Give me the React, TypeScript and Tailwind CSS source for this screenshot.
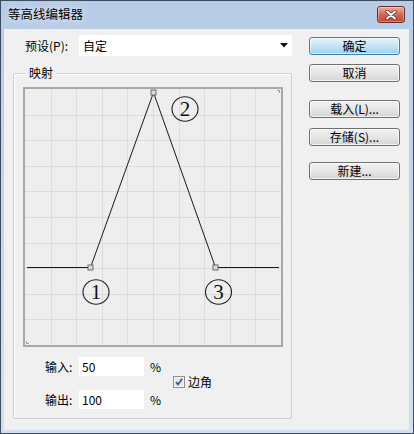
import React from "react";

const font = { fontFamily: '"Noto Sans CJK SC", "Noto Sans", sans-serif' };

function Btn({ label, primary, mt }: { label: string; primary?: boolean; mt: string }) {
  return (
    <div
      className={
        "w-[91px] h-[18px] rounded-[3px] border flex items-center justify-center text-[12px] leading-none text-black " +
        mt +
        " " +
        (primary
          ? "border-[#3c7fb1] bg-gradient-to-b from-[#e5f4fc] via-[#c4e5f6] to-[#98d1ef] shadow-[inset_0_0_0_1px_rgba(255,255,255,0.6)]"
          : "border-[#707070] bg-gradient-to-b from-[#f2f2f2] via-[#e6e6e6] to-[#d4d4d4] shadow-[inset_0_0_0_1px_rgba(255,255,255,0.7)]")
      }
    >
      {label}
    </div>
  );
}

function Circled({ cx, cy, n }: { cx: number; cy: number; n: string }) {
  return (
    <g>
      <ellipse cx={cx} cy={cy} rx={13} ry={12.3} fill="none" stroke="#222" strokeWidth={1.1} />
      <text
        x={cx}
        y={cy + 7}
        textAnchor="middle"
        fontSize={21}
        fill="#111"
        style={{ fontFamily: '"Liberation Serif", "DejaVu Serif", serif' }}
      >
        {n}
      </text>
    </g>
  );
}

function Graph() {
  const lines = [];
  for (let i = 1; i < 10; i++) {
    const p = Math.round(i * 25.6) + 0.5;
    lines.push(<line key={"v" + i} x1={p} y1={0} x2={p} y2={256} stroke="#dcdcdc" strokeWidth={1} />);
    lines.push(<line key={"h" + i} x1={0} y1={p} x2={256} y2={p} stroke="#dcdcdc" strokeWidth={1} />);
  }
  const handle = (x: number, y: number) => (
    <rect x={x - 2.5} y={y - 2.5} width={5} height={5} fill="#dcdcdc" stroke="#6a6a6a" strokeWidth={1} />
  );
  return (
    <div className="relative w-[260px] h-[260px] border-2 border-[#a8a8a8] bg-[#eeeeee] ml-[9px] mt-[13px]">
      <svg width={256} height={256} className="absolute left-0 top-0">
        {lines}
        <polyline points="252,1.5 254.5,1.5 254.5,4" fill="none" stroke="#9a9a9a" />
        <polyline points="1.5,252 1.5,254.5 4,254.5" fill="none" stroke="#9a9a9a" />
        <polyline
          points="2,178.5 65.5,178.5 128.5,3.5 190.5,178.5 254,178.5"
          fill="none"
          stroke="#1a1a1a"
          strokeWidth={1}
        />
        {handle(65.5, 178.5)}
        {handle(128.5, 3.5)}
        {handle(190.5, 178.5)}
        <Circled cx={71} cy={203} n="1" />
        <Circled cx={160} cy={20} n="2" />
        <Circled cx={193.5} cy={203} n="3" />
      </svg>
    </div>
  );
}

export default function App() {
  return (
    <div
      className="w-[414px] h-[434px] border border-[#3d4b5c] bg-gradient-to-b from-[#b7cce7] to-[#d3e0f1] flex flex-col text-[12px] text-black"
      style={font}
    >
      {/* title bar */}
      <div className="h-[28px] flex items-start justify-between">
        <span className="ml-[7px] mt-[5px] text-[12.5px] leading-[16px] text-black [text-shadow:0_0_6px_rgba(255,255,255,0.9)]">
          等高线编辑器
        </span>
        <div className="mt-[5px] mr-[8px] w-[28px] h-[17px] rounded-[3px] border border-[#6b2b22] bg-gradient-to-b from-[#eab0a2] via-[#d0685a] to-[#c0432f] flex items-center justify-center shadow-[inset_0_0_0_1px_rgba(255,255,255,0.35)]">
          <svg width="12" height="10" viewBox="0 0 12 10">
            <path d="M2 1.5 L10 8.5 M10 1.5 L2 8.5" stroke="#5a2a22" strokeWidth="3.4" strokeLinecap="round" />
            <path d="M2 1.5 L10 8.5 M10 1.5 L2 8.5" stroke="#ffffff" strokeWidth="2" strokeLinecap="round" />
          </svg>
        </div>
      </div>

      {/* content */}
      <div className="h-[401px] ml-[3px] mr-[4px] bg-[#f0f0f0] flex">
        {/* left column */}
        <div className="w-[288px] pl-[9px] pt-[6px] flex flex-col">
          <div className="flex items-center h-[21px]">
            <span className="ml-[12px] w-[54px] leading-none">预设(P):</span>
            <div className="w-[213px] h-[21px] bg-white flex items-center justify-between pl-[4px] pr-[4px]">
              <span className="leading-none">自定</span>
              <svg width="8" height="5" viewBox="0 0 8 5">
                <path d="M0 0 L8 0 L4 4.5 Z" fill="#111" />
              </svg>
            </div>
          </div>

          <div className="relative mt-[17px] w-[279px] h-[346px] border border-[#cfcfcf] rounded-[2px] shadow-[inset_1px_1px_0_#ffffff]">
            <span className="absolute left-[11px] top-[-9px] px-[4px] bg-[#f0f0f0] leading-[16px]">映射</span>
            <Graph />
            <div className="flex items-center mt-[10px]">
              <div className="flex flex-col gap-[14px] ml-[31px]">
                <div className="flex items-center h-[19px]">
                  <span className="w-[34px] leading-none">输入:</span>
                  <div className="w-[65px] h-[19px] bg-white flex items-center pl-[3px] leading-none">50</div>
                  <span className="ml-[6px] w-[14px] leading-none">%</span>
                </div>
                <div className="flex items-center h-[19px]">
                  <span className="w-[34px] leading-none">输出:</span>
                  <div className="w-[65px] h-[19px] bg-white flex items-center pl-[3px] leading-none">100</div>
                  <span className="ml-[6px] w-[14px] leading-none">%</span>
                </div>
              </div>
              <div className="flex items-center ml-[9px] mt-[-3px]">
                <svg width="12" height="12" viewBox="0 0 12 12">
                  <rect x="0.5" y="0.5" width="11" height="11" fill="#f4f4f4" stroke="#8e8f8f" />
                  <rect x="2" y="2" width="8" height="8" fill="#e2e6ee" />
                  <path d="M3 6 L5 8.5 L9.2 2.8" fill="none" stroke="#3b4f8c" strokeWidth="1.6" />
                </svg>
                <span className="ml-[3px] leading-none">边角</span>
              </div>
            </div>
          </div>
        </div>

        {/* right column */}
        <div className="ml-[17px] pt-[8px] flex flex-col">
          <Btn label="确定" primary mt="mt-0" />
          <Btn label="取消" mt="mt-[9px]" />
          <Btn label="载入(L)..." mt="mt-[18px]" />
          <Btn label="存储(S)..." mt="mt-[10px]" />
          <Btn label="新建..." mt="mt-[16px]" />
        </div>
      </div>
    </div>
  );
}
